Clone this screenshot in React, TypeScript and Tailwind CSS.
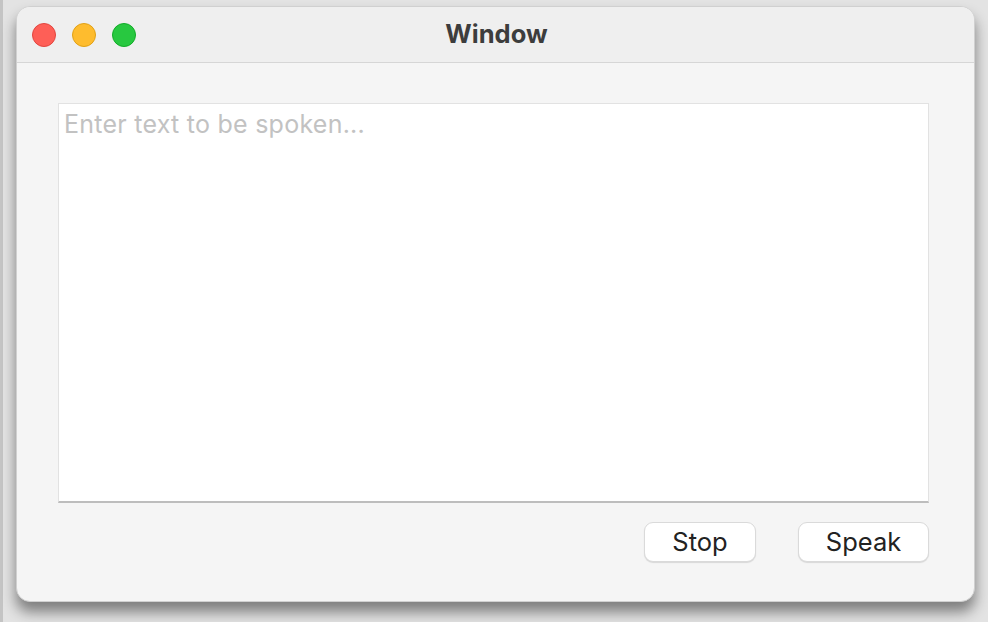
import React from "react";

export default function App() {
  return (
    <div className="w-[988px] h-[622px] bg-[#e3e3e3] flex overflow-hidden" style={{ fontFamily: '"Open Sans", "Liberation Sans", sans-serif' }}>
      <div className="w-[3px] h-full bg-[#c4c4c4]" />
      <div className="pl-[13px] pt-[6px]">
        <div className="w-[959px] h-[596px] rounded-[14px] bg-[#f5f5f5] flex flex-col overflow-hidden shadow-[0_10px_14px_rgba(0,0,0,0.45)] border border-[#d0d0d0]">
          <div className="h-[56px] bg-[#efefef] border-b border-[#d6d6d6] flex items-center relative shrink-0">
            <div className="flex items-center gap-[16px] pl-[15px]">
              <div className="w-[24px] h-[24px] rounded-full bg-[#fe5f57] border border-[#e2463f]" />
              <div className="w-[24px] h-[24px] rounded-full bg-[#febc2e] border border-[#e1a116]" />
              <div className="w-[24px] h-[24px] rounded-full bg-[#28c840] border border-[#12ac28]" />
            </div>
            <div className="absolute inset-0 flex items-center justify-center pl-[2px] text-[25.5px] font-bold text-[#3d3d3d]" style={{ fontFamily: 'Inter, "Liberation Sans", sans-serif' }}>
              Window
            </div>
          </div>
          <div className="flex-1 flex flex-col pl-[41px] pr-[45px] pt-[40px]">
            <div className="h-[400px] bg-white border border-[#e2e2e2] border-b-2 border-b-[#bdbdbd] px-[5px] pt-[5px]">
              <div className="text-[25px] leading-[30px] tracking-[0.25px] text-[#c2c2c2]" style={{ fontFamily: 'Inter, "Liberation Sans", sans-serif' }}>Enter text to be spoken...</div>
            </div>
            <div className="flex justify-end gap-[42px] pt-[19px]">
              <button className="w-[112px] h-[40px] rounded-[9px] bg-white border border-[#dadada] shadow-[0_1px_1px_rgba(0,0,0,0.12)] text-[25.5px] text-[#222]" style={{ fontFamily: 'Inter, "Liberation Sans", sans-serif' }}>Stop</button>
              <button className="w-[131px] h-[40px] rounded-[9px] bg-white border border-[#dadada] shadow-[0_1px_1px_rgba(0,0,0,0.12)] text-[25.5px] text-[#222]" style={{ fontFamily: 'Inter, "Liberation Sans", sans-serif' }}>Speak</button>
            </div>
          </div>
        </div>
      </div>
    </div>
  );
}
